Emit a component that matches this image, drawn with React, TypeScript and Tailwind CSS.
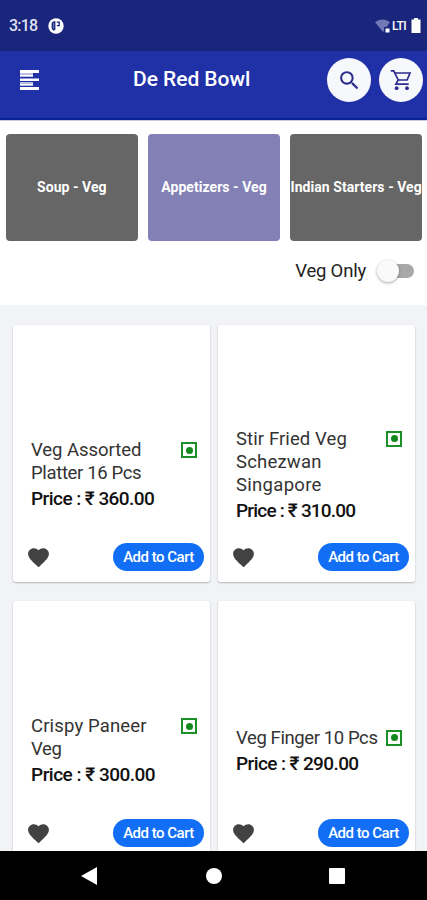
import { useState } from "react";
import { MdSearch, MdFavorite } from "react-icons/md";
import { clsx } from "clsx";

interface Dish {
  id: number;
  lines: { text: string; className: string }[];
  price: string;
  priceClass: string;
}

const CATEGORIES = [
  { label: "Soup - Veg", labelClass: "tracking-[0.05px]" },
  { label: "Appetizers - Veg", labelClass: "tracking-[0.05px]" },
  { label: "Indian Starters - Veg", labelClass: "tracking-[0.05px]" },
];

const DISHES: Dish[] = [
  {
    id: 1,
    lines: [
      { text: "Veg Assorted", className: "tracking-[-0.05px]" },
      { text: "Platter 16 Pcs", className: "tracking-[-0.35px]" },
    ],
    price: "360.00",
    priceClass: "tracking-[-0.55px]",
  },
  {
    id: 2,
    lines: [
      { text: "Stir Fried Veg", className: "tracking-[0.1px]" },
      { text: "Schezwan", className: "tracking-[0.2px]" },
      { text: "Singapore", className: "tracking-[0.3px]" },
    ],
    price: "310.00",
    priceClass: "tracking-[-0.8px]",
  },
  {
    id: 3,
    lines: [
      { text: "Crispy Paneer", className: "tracking-[0.15px]" },
      { text: "Veg", className: "tracking-[-0.4px]" },
    ],
    price: "300.00",
    priceClass: "tracking-[-0.5px]",
  },
  {
    id: 4,
    lines: [{ text: "Veg Finger 10 Pcs", className: "tracking-[-0.4px]" }],
    price: "290.00",
    priceClass: "tracking-[-0.6px]",
  },
];

function StatusBar() {
  return (
    <div className="flex h-[51px] shrink-0 items-center bg-[#1a257c] pl-[9px] pr-[6px] text-white">
      <span className="w-[39px] text-[16px] font-medium leading-5 tracking-[-0.8px] text-[#dfe1f3]">3:18</span>
      <svg className="h-4 w-4" viewBox="0 0 16 16">
        <circle cx="8" cy="8" r="7.7" fill="#fff" />
        <path d="M7.4 3.2H5.6a3 3 0 0 0-2 2.8v3.2c0 1.8 1 3 2.4 3.6l1.4-1.1z" fill="#1a257c" />
        <path d="M8.8 4.2h2.4v3.4H8.8" fill="none" stroke="#1a257c" strokeWidth="1.3" />
        <path d="M5.6 5v5.5" stroke="#8d94c9" strokeWidth="0.8" />
      </svg>
      <svg className="ml-auto h-[14px] w-[15px]" viewBox="0 0 15 14">
        <path d="M0 3.3C4-.6 11-.6 15 3.3L8 13Z" fill="#7078b5" />
        <path d="M9 8h6v6H9z" fill="#1a257c" />
        <path d="M10.5 9.5h4v4h-4z" fill="#fff" />
      </svg>
      <span className="ml-[2px] w-[16px] overflow-hidden whitespace-nowrap text-[12px] font-medium leading-4 tracking-[-0.5px]">LTI</span>
      <svg className="ml-[3px] h-[15px] w-[10px]" viewBox="0 0 10 15">
        <path d="M3 0h4v1.5h2.5V15h-9V1.5H3z" fill="#fff" />
      </svg>
    </div>
  );
}

function CartIcon() {
  return (
    <svg className="h-6 w-6" viewBox="0 0 24 24" fill="none" stroke="currentColor" strokeWidth="1.7">
      <path d="M1.8 2.8h2.9L9.2 12 6.9 16.2h12.8" />
      <path d="M5.5 5H21l-2.9 7H9.2" />
      <circle cx="7.6" cy="20.2" r="1.9" fill="currentColor" stroke="none" />
      <circle cx="18" cy="20.2" r="1.9" fill="currentColor" stroke="none" />
    </svg>
  );
}

function Header() {
  return (
    <header className="flex h-[69px] shrink-0 items-center border-b-2 border-[#0c2298] bg-[#2031a8] pb-[9px] pl-[20px] pr-[4px]">
      <button>
        <svg className="h-5 w-5" viewBox="0 0 20 20">
          <path d="M0 3h13v4H0zM0 12h13v4H0z" fill="#b9bfe6" />
          <path d="M0 0h19v3H0zM0 8.5h19v2.5H0zM0 17h19v3H0zM0 5h13v1H0zM0 14h13v1H0z" fill="#fff" />
        </svg>
      </button>
      <h1 className="mb-[3px] ml-[93px] whitespace-nowrap text-[21px] font-medium leading-6 tracking-[-0.05px] text-white">De Red Bowl</h1>
      <div className="ml-auto flex gap-2 text-[#2c2b8c]">
        <button className="flex h-11 w-11 items-center justify-center rounded-full bg-[#f7f8fc]">
          <MdSearch className="h-[25px] w-[25px]" />
        </button>
        <button className="flex h-11 w-11 items-center justify-center rounded-full bg-[#f7f8fc]">
          <CartIcon />
        </button>
      </div>
    </header>
  );
}

function VegMark() {
  return (
    <span className="flex h-4 w-4 shrink-0 items-center justify-center border-2 border-[#1c8f26]">
      <span className="h-[7px] w-[7px] rounded-full bg-[#118a1b]" />
    </span>
  );
}

function DishCard({ dish }: { dish: Dish }) {
  return (
    <article className="flex h-[257px] flex-col rounded-[3px] bg-white pl-[18px] pr-[6px] pt-[86px] shadow-[0_1px_2px_rgba(0,0,0,0.25)]">
      <div className="flex h-[130px] flex-col justify-center">
        <div className="flex items-start justify-between pr-[7px]">
          <h2 className="whitespace-nowrap text-[18.5px] leading-[23px] text-[#333]">
            {dish.lines.map((line) => (
              <span key={line.text} className={clsx("block", line.className)}>{line.text}</span>
            ))}
          </h2>
          <div className="pt-[3px]">
            <VegMark />
          </div>
        </div>
        <p className={clsx("whitespace-nowrap text-[19px] font-medium leading-[28px] text-[#111]", dish.priceClass)}>
          Price : ₹ {dish.price}
        </p>
      </div>
      <div className="mt-[2px] flex h-7 items-center justify-between">
        <button className="-ml-[5px] text-[#424242]">
          <MdFavorite className="h-[25px] w-[25px]" />
        </button>
        <button className="h-7 w-[91px] rounded-full bg-[#126ff5] text-[15px] font-medium tracking-[-0.5px] text-white">Add to Cart</button>
      </div>
    </article>
  );
}

function NavBar() {
  return (
    <nav className="flex h-[49px] shrink-0 items-center justify-between bg-black pl-[81px] pr-[82px]">
      <svg className="h-[18px] w-4" viewBox="0 0 16 18">
        <path d="M0 9 16 0v18z" fill="#fff" />
      </svg>
      <span className="ml-[2px] h-4 w-4 rounded-full bg-white" />
      <span className="h-4 w-4 rounded-[1px] bg-white" />
    </nav>
  );
}

export default function App() {
  const [active, setActive] = useState(1);
  const [vegOnly, setVegOnly] = useState(false);

  return (
    <div className="flex h-[900px] w-[427px] flex-col overflow-hidden bg-[#f1f3f7] font-['Roboto',sans-serif]">
      <StatusBar />
      <Header />

      {/* Categories and filter */}
      <section className="h-[185px] shrink-0 border-t border-[#c6cae6] bg-white px-[6px] pt-[13px]">
        <div className="flex w-[416px] gap-[10.5px]">
          {CATEGORIES.map((category, i) => (
            <button
              key={category.label}
              onClick={() => setActive(i)}
              className={clsx(
                "flex h-[107px] min-w-0 flex-1 items-center justify-center overflow-hidden rounded-[4px] text-[14px] font-bold whitespace-nowrap text-white",
                active === i ? "bg-[#8280b4]" : "bg-[#666]"
              )}
            >
              <span className={category.labelClass}>{category.label}</span>
            </button>
          ))}
        </div>
        <label className="mt-[18px] flex items-center justify-end pr-[7px]">
          <span className="text-[18.5px] leading-6 tracking-[-0.2px] text-[#222]">Veg Only</span>
          <button
            onClick={() => setVegOnly((v) => !v)}
            className={clsx("ml-[11px] flex h-[14px] w-[37px] items-center rounded-full bg-[#a8a8a8]", vegOnly && "justify-end")}
          >
            <span className="h-[22px] w-[22px] rounded-full bg-[#fafafa] shadow-[0_1px_3px_rgba(0,0,0,0.35)]" />
          </button>
        </label>
      </section>

      {/* Dishes */}
      <main className="min-h-0 flex-1 overflow-hidden px-[13px] pt-[20px]">
        <div className="grid w-[402px] grid-cols-2 gap-x-[8px] gap-y-[19px]">
          {DISHES.map((dish) => (
            <DishCard key={dish.id} dish={dish} />
          ))}
        </div>
      </main>
      <NavBar />
    </div>
  );
}
